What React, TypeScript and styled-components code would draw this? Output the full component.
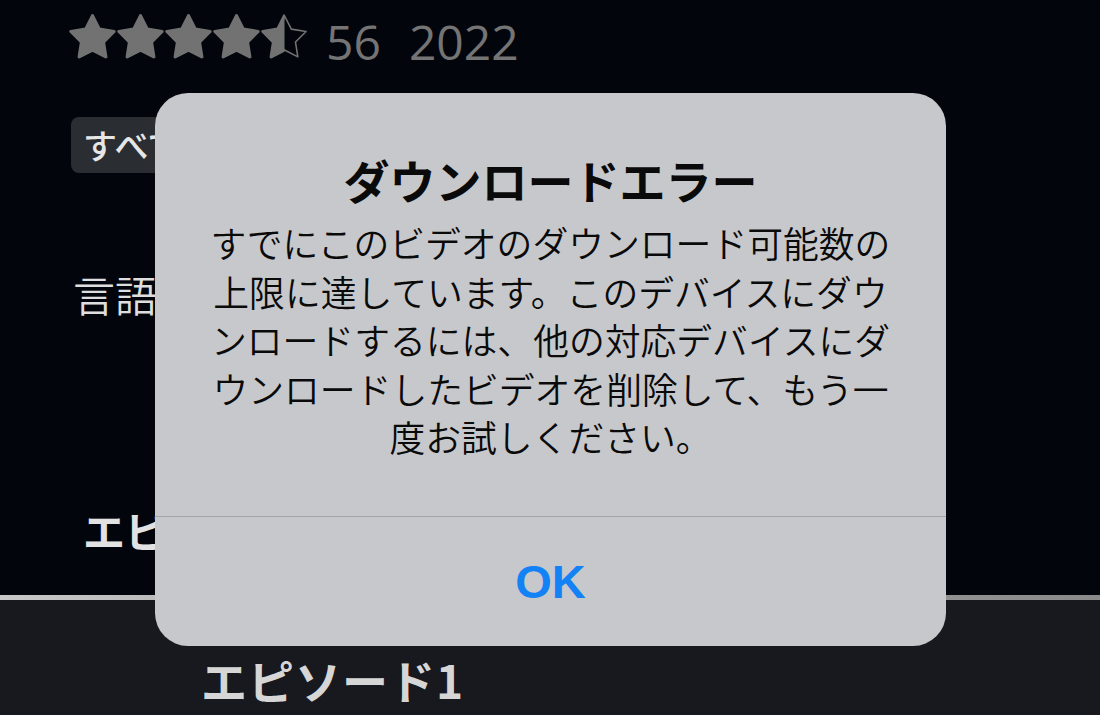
import React from "react";
import styled, { createGlobalStyle } from "styled-components";

const GlobalStyle = createGlobalStyle`
  html, body {
    margin: 0;
    padding: 0;
    background: #03050c;
    overflow: hidden;
  }
  * {
    box-sizing: border-box;
  }
`;

const JP = `"Noto Sans CJK JP", "Noto Sans", sans-serif`;
const LATIN = `"Open Sans", "Noto Sans", "Liberation Sans", sans-serif`;
const STAR_GRAY = "#727272";

// rounded five point star, built once
function starPoints(cx: number, cy: number, outer: number, inner: number) {
  const pts: string[] = [];
  for (let i = 0; i < 10; i++) {
    const r = i % 2 === 0 ? outer : inner;
    const a = -Math.PI / 2 + (i * Math.PI) / 5;
    pts.push(`${(cx + r * Math.cos(a)).toFixed(2)},${(cy + r * Math.sin(a)).toFixed(2)}`);
  }
  return pts.join(" ");
}

const STAR = starPoints(12, 13, 11.6, 5.9);

const Page = styled.div`
  width: 1100px;
  height: 715px;
  position: relative;
  display: flex;
  flex-direction: column;
  font-family: ${JP};
`;

const TopArea = styled.section`
  height: 595px;
  background: #03050c;
  padding: 13px 0 0 69px;
  display: flex;
  flex-direction: column;
  align-items: flex-start;
`;

const RatingRow = styled.div`
  display: flex;
  align-items: center;
  height: 47px;
  gap: 1px;
`;

const StarSvg = styled.svg`
  width: 47px;
  height: 47px;
  display: block;
`;

const Meta = styled.span<{ $gap: number }>`
  font-family: ${LATIN};
  font-size: 48px;
  color: #747474;
  line-height: 47px;
  padding-top: 10px;
  margin-left: ${(p) => p.$gap}px;
`;

const Chip = styled.div`
  margin-top: 57px;
  margin-left: 2px;
  height: 56px;
  width: 180px;
  border-radius: 8px;
  background: #2a2d32;
  color: #e6e6e6;
  font-size: 34px;
  font-weight: 500;
  line-height: 56px;
  padding-left: 12px;
`;

const Language = styled.div`
  margin-top: 95px;
  margin-left: 4px;
  font-size: 42px;
  font-weight: 350;
  line-height: 52px;
  color: #dedede;
`;

const SectionTitle = styled.div`
  margin-top: 184px;
  margin-left: 14px;
  font-size: 42px;
  font-weight: 700;
  line-height: 52px;
  color: #e2e2e2;
`;

const Progress = styled.div`
  height: 5px;
  background: linear-gradient(90deg, #c8c8c8 0%, #a5a5a5 40%, #8a8a8a 100%);
`;

const BottomArea = styled.section`
  flex: 1;
  background: #17191e;
  padding: 50px 0 0 201px;
`;

const EpisodeName = styled.div`
  font-size: 46px;
  font-weight: 700;
  line-height: 58px;
  letter-spacing: 1px;
  color: #d6d6d6;
`;

const Dialog = styled.div`
  position: absolute;
  left: 155px;
  top: 93px;
  width: 791px;
  height: 553px;
  border-radius: 33px;
  background: #c7c8cb;
  display: flex;
  flex-direction: column;
  overflow: hidden;
`;

const DialogBody = styled.div`
  height: 423px;
  padding: 58px 30px 0;
  display: flex;
  flex-direction: column;
  align-items: center;
  text-align: center;
  color: #0a0a0a;
`;

const DialogTitle = styled.h2`
  margin: 0;
  font-size: 46px;
  font-weight: 700;
  line-height: 56px;
`;

const Message = styled.p`
  margin: 11px 0 0;
  font-size: 35.8px;
  font-weight: 350;
  line-height: 48.5px;
`;

const Line = styled.span`
  display: block;
  white-space: nowrap;
`;

const Divider = styled.div`
  height: 1px;
  background: #a3a4a8;
`;

const ButtonArea = styled.div`
  flex: 1;
  display: flex;
  align-items: center;
  justify-content: center;
`;

const OkButton = styled.button`
  border: none;
  background: none;
  padding: 0;
  font-family: "Liberation Sans", Arial, sans-serif;
  font-size: 47px;
  font-weight: 700;
  color: #1282f5;
`;

function Star({ kind, id }: { kind: "full" | "half"; id: string }) {
  if (kind === "full") {
    return (
      <StarSvg viewBox="0 0 24 24">
        <polygon points={STAR} fill={STAR_GRAY} stroke={STAR_GRAY} strokeWidth={1.6} strokeLinejoin="round" />
      </StarSvg>
    );
  }
  return (
    <StarSvg viewBox="0 0 24 24">
      <defs>
        <clipPath id={id}>
          <rect x="0" y="0" width="12" height="24" />
        </clipPath>
      </defs>
      <polygon points={STAR} fill="none" stroke={STAR_GRAY} strokeWidth={0.8} strokeLinejoin="round" />
      <polygon
        points={STAR}
        fill={STAR_GRAY}
        stroke={STAR_GRAY}
        strokeWidth={1.6}
        strokeLinejoin="round"
        clipPath={`url(#${id})`}
      />
    </StarSvg>
  );
}

const lines = [
  "すでにこのビデオのダウンロード可能数の",
  "上限に達しています。このデバイスにダウ",
  "ンロードするには、他の対応デバイスにダ",
  "ウンロードしたビデオを削除して、もう一",
  "度お試しください。",
];

export default function App() {
  return (
    <Page>
      <GlobalStyle />
      <TopArea>
        <RatingRow>
          {[0, 1, 2, 3].map((i) => (
            <Star key={i} kind="full" id={`s${i}`} />
          ))}
          <Star kind="half" id="half-star" />
          <Meta $gap={17}>56</Meta>
          <Meta $gap={27}>2022</Meta>
        </RatingRow>
        <Chip>すべて</Chip>
        <Language>言語</Language>
        <SectionTitle>エピソード</SectionTitle>
      </TopArea>
      <Progress />
      <BottomArea>
        <EpisodeName>エピソード1</EpisodeName>
      </BottomArea>

      <Dialog role="alertdialog">
        <DialogBody>
          <DialogTitle>ダウンロードエラー</DialogTitle>
          <Message>
            {lines.map((l) => (
              <Line key={l}>{l}</Line>
            ))}
          </Message>
        </DialogBody>
        <Divider />
        <ButtonArea>
          <OkButton>OK</OkButton>
        </ButtonArea>
      </Dialog>
    </Page>
  );
}
